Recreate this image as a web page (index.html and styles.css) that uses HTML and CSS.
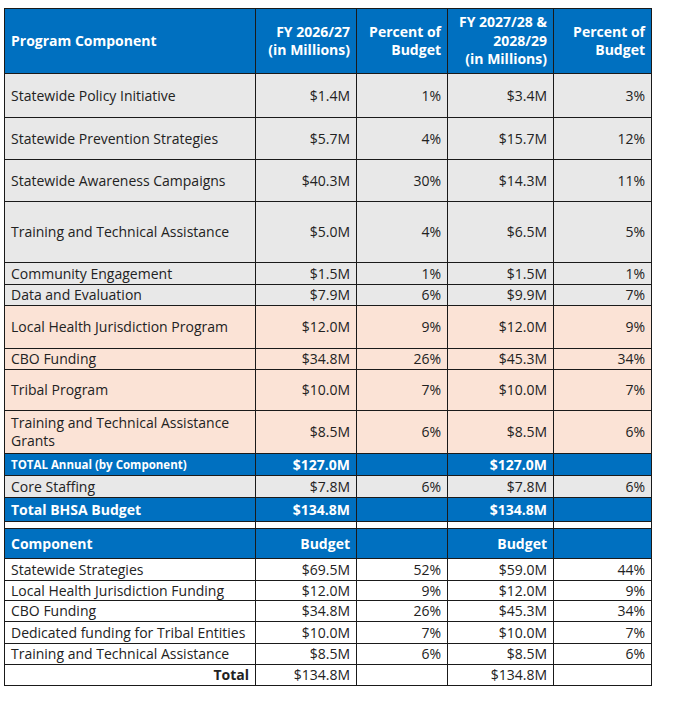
FILE: index.html
```html
<!DOCTYPE html>
<html lang="en">
<head>
<meta charset="utf-8">
<title>BHSA Budget</title>
<link rel="stylesheet" href="styles.css">
</head>
<body>
<div class="wrap">
<table class="budget">
  <colgroup>
    <col class="c1"><col class="c2"><col class="c3"><col class="c4"><col class="c5">
  </colgroup>
  <tr class="head h65">
    <td class="l">Program Component</td>
    <td>FY 2026/27<br>(in Millions)</td>
    <td>Percent of<br>Budget</td>
    <td>FY 2027/28 &amp;<br>2028/29<br>(in Millions)</td>
    <td>Percent of<br>Budget</td>
  </tr>
  <tr class="gray h44"><td class="l">Statewide Policy Initiative</td><td>$1.4M</td><td>1%</td><td>$3.4M</td><td>3%</td></tr>
  <tr class="gray h42"><td class="l">Statewide Prevention Strategies</td><td>$5.7M</td><td>4%</td><td>$15.7M</td><td>12%</td></tr>
  <tr class="gray h42"><td class="l">Statewide Awareness Campaigns</td><td>$40.3M</td><td>30%</td><td>$14.3M</td><td>11%</td></tr>
  <tr class="gray h61"><td class="l">Training and Technical Assistance</td><td>$5.0M</td><td>4%</td><td>$6.5M</td><td>5%</td></tr>
  <tr class="gray h22"><td class="l">Community Engagement</td><td>$1.5M</td><td>1%</td><td>$1.5M</td><td>1%</td></tr>
  <tr class="gray h21"><td class="l">Data and Evaluation</td><td>$7.9M</td><td>6%</td><td>$9.9M</td><td>7%</td></tr>
  <tr class="peach h43"><td class="l">Local Health Jurisdiction Program</td><td>$12.0M</td><td>9%</td><td>$12.0M</td><td>9%</td></tr>
  <tr class="peach h21"><td class="l">CBO Funding</td><td>$34.8M</td><td>26%</td><td>$45.3M</td><td>34%</td></tr>
  <tr class="peach h41"><td class="l">Tribal Program</td><td>$10.0M</td><td>7%</td><td>$10.0M</td><td>7%</td></tr>
  <tr class="peach h43"><td class="l">Training and Technical Assistance<br>Grants</td><td>$8.5M</td><td>6%</td><td>$8.5M</td><td>6%</td></tr>
  <tr class="blue h22"><td class="l small">TOTAL Annual (by Component)</td><td>$127.0M</td><td></td><td>$127.0M</td><td></td></tr>
  <tr class="gray h22"><td class="l">Core Staffing</td><td>$7.8M</td><td>6%</td><td>$7.8M</td><td>6%</td></tr>
  <tr class="blue h24"><td class="l">Total BHSA Budget</td><td>$134.8M</td><td></td><td>$134.8M</td><td></td></tr>
  <tr class="gap"><td></td><td></td><td></td><td></td><td></td></tr>
  <tr class="blue h30"><td class="l">Component</td><td>Budget</td><td></td><td>Budget</td><td></td></tr>
  <tr class="white h22"><td class="l">Statewide Strategies</td><td>$69.5M</td><td>52%</td><td>$59.0M</td><td>44%</td></tr>
  <tr class="white h20"><td class="l">Local Health Jurisdiction Funding</td><td>$12.0M</td><td>9%</td><td>$12.0M</td><td>9%</td></tr>
  <tr class="white h21"><td class="l">CBO Funding</td><td>$34.8M</td><td>26%</td><td>$45.3M</td><td>34%</td></tr>
  <tr class="white h22"><td class="l">Dedicated funding for Tribal Entities</td><td>$10.0M</td><td>7%</td><td>$10.0M</td><td>7%</td></tr>
  <tr class="white h21"><td class="l">Training and Technical Assistance</td><td>$8.5M</td><td>6%</td><td>$8.5M</td><td>6%</td></tr>
  <tr class="white h21"><td class="bold">Total</td><td>$134.8M</td><td></td><td>$134.8M</td><td></td></tr>
</table>
</div>
</body>
</html>
```
FILE: styles.css
```css
html, body {
  margin: 0;
  padding: 0;
  background: #ffffff;
}
.wrap {
  padding: 8px 0 0 4px;
}
.budget {
  border-collapse: collapse;
  table-layout: fixed;
  width: 647px;
  font-family: "Open Sans", "Liberation Sans", sans-serif;
  font-size: 14px;
  font-weight: 500;
  color: #222222;
  border: 1px solid #333;
}
.c1 { width: 251px; }
.c2 { width: 101px; }
.c3 { width: 91px; }
.c4 { width: 106px; }
.c5 { width: 98px; }
.budget td {
  border: 1px solid #1a1a1a;
  padding: 0 6px 0 6px;
  text-align: right;
  vertical-align: middle;
  line-height: 18px;
  white-space: nowrap;
}
.budget td.l { text-align: left; }
.budget td.bold { font-weight: 700; }
.head td {
  background: #0070c0;
  color: #ffffff;
  font-weight: 700;
  line-height: 18.5px;
}
.gray td { background: #e8e8e8; }
.peach td { background: #fbe3d6; }
.white td { background: #ffffff; }
.blue td {
  background: #0070c0;
  color: #ffffff;
  font-weight: 700;
}
.blue td.small { font-size: 11.5px; }
.gap td { height: 6px; padding: 0; background: #fff; line-height: 0; }
.h65 td { height: 64px; }
.h61 td { height: 60px; }
.h44 td { height: 43px; }
.h43 td { height: 42px; }
.h42 td { height: 41px; }
.h41 td { height: 40px; }
.h30 td { height: 29px; }
.h24 td { height: 23px; }
.h22 td { height: 21px; }
.h21 td { height: 20px; }
.h20 td { height: 19px; }
```
